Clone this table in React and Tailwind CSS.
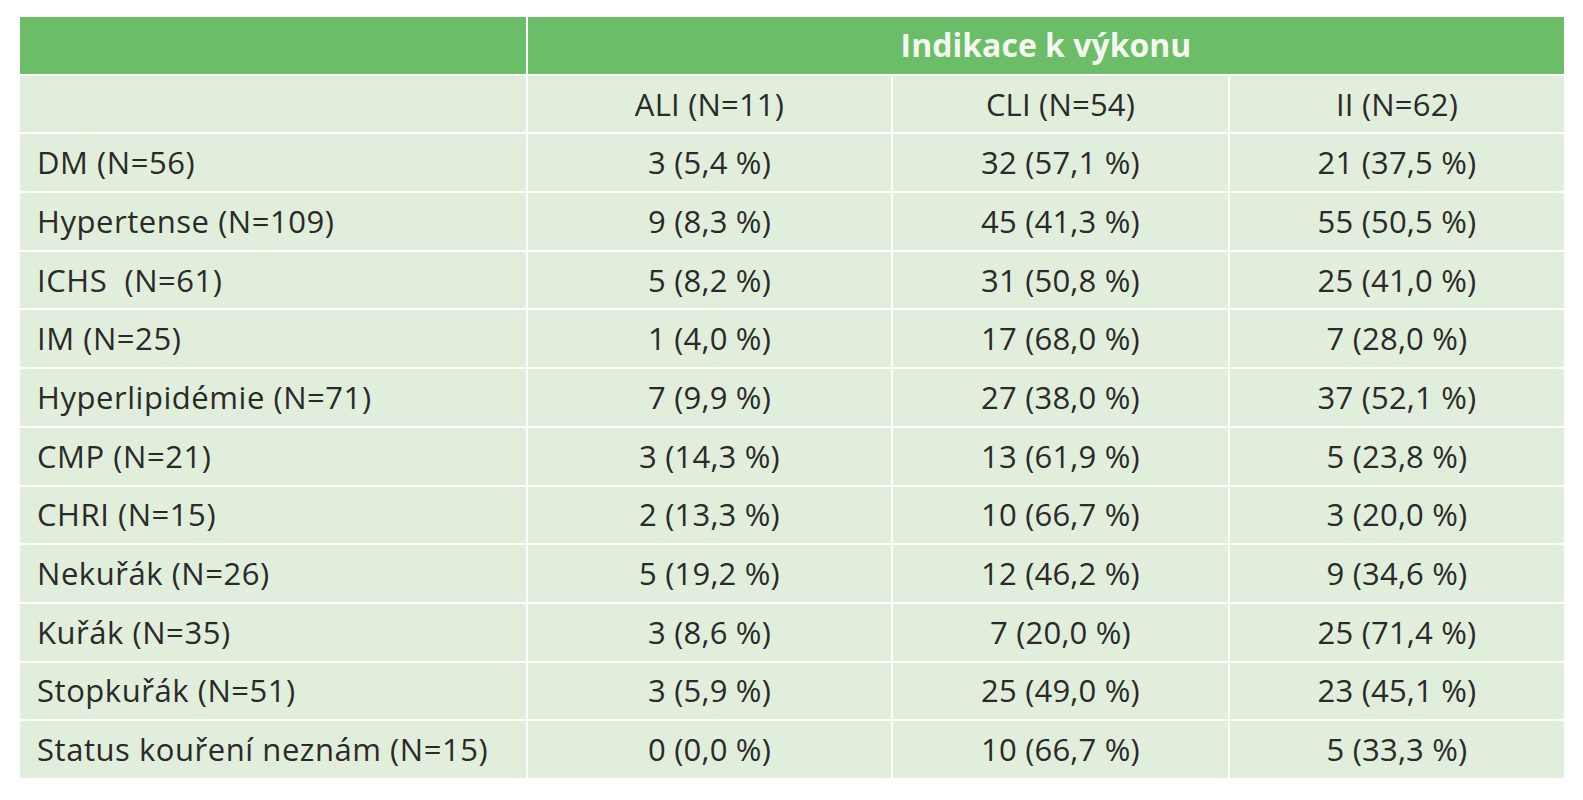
import React from "react";

const rows = [
  ["DM (N=56)", "3 (5,4 %)", "32 (57,1 %)", "21 (37,5 %)"],
  ["Hypertense (N=109)", "9 (8,3 %)", "45 (41,3 %)", "55 (50,5 %)"],
  ["ICHS\u00a0\u00a0(N=61)", "5 (8,2 %)", "31 (50,8 %)", "25 (41,0 %)"],
  ["IM (N=25)", "1 (4,0 %)", "17 (68,0 %)", "7 (28,0 %)"],
  ["Hyperlipidémie (N=71)", "7 (9,9 %)", "27 (38,0 %)", "37 (52,1 %)"],
  ["CMP (N=21)", "3 (14,3 %)", "13 (61,9 %)", "5 (23,8 %)"],
  ["CHRI (N=15)", "2 (13,3 %)", "10 (66,7 %)", "3 (20,0 %)"],
  ["Nekuřák (N=26)", "5 (19,2 %)", "12 (46,2 %)", "9 (34,6 %)"],
  ["Kuřák (N=35)", "3 (8,6 %)", "7 (20,0 %)", "25 (71,4 %)"],
  ["Stopkuřák (N=51)", "3 (5,9 %)", "25 (49,0 %)", "23 (45,1 %)"],
  ["Status kouření neznám (N=15)", "0 (0,0 %)", "10 (66,7 %)", "5 (33,3 %)"],
];

function Cell({ children, left }) {
  return (
    <div
      className={
        "bg-[#e1eedb] flex items-center text-[#2a2a2a] " +
        (left ? "pl-[17px] tracking-[0.55px]" : "justify-center tracking-[0.2px]")
      }
    >
      {children}
    </div>
  );
}

export default function App() {
  return (
    <div className="bg-white w-[1583px] h-[800px] pt-[17px] pl-[20px]">
      <div
        className="grid grid-cols-[506px_363px_335px_334px] grid-rows-13 gap-[2px] h-[761px] w-[1544px] text-[31px] leading-none"
        style={{ fontFamily: '"Open Sans", "Noto Sans", sans-serif' }}
      >
        <div className="bg-[#6bbd67]"></div>
        <div className="col-span-3 bg-[#6bbd67] flex items-center justify-center font-bold text-[32px] tracking-[0px] text-[#f3f9ef]">
          Indikace k výkonu
        </div>

        <Cell left></Cell>
        <Cell>ALI (N=11)</Cell>
        <Cell>CLI (N=54)</Cell>
        <Cell>II (N=62)</Cell>

        {rows.map((r, i) => (
          <React.Fragment key={i}>
            <Cell left>{r[0]}</Cell>
            <Cell>{r[1]}</Cell>
            <Cell>{r[2]}</Cell>
            <Cell>{r[3]}</Cell>
          </React.Fragment>
        ))}
      </div>
    </div>
  );
}
